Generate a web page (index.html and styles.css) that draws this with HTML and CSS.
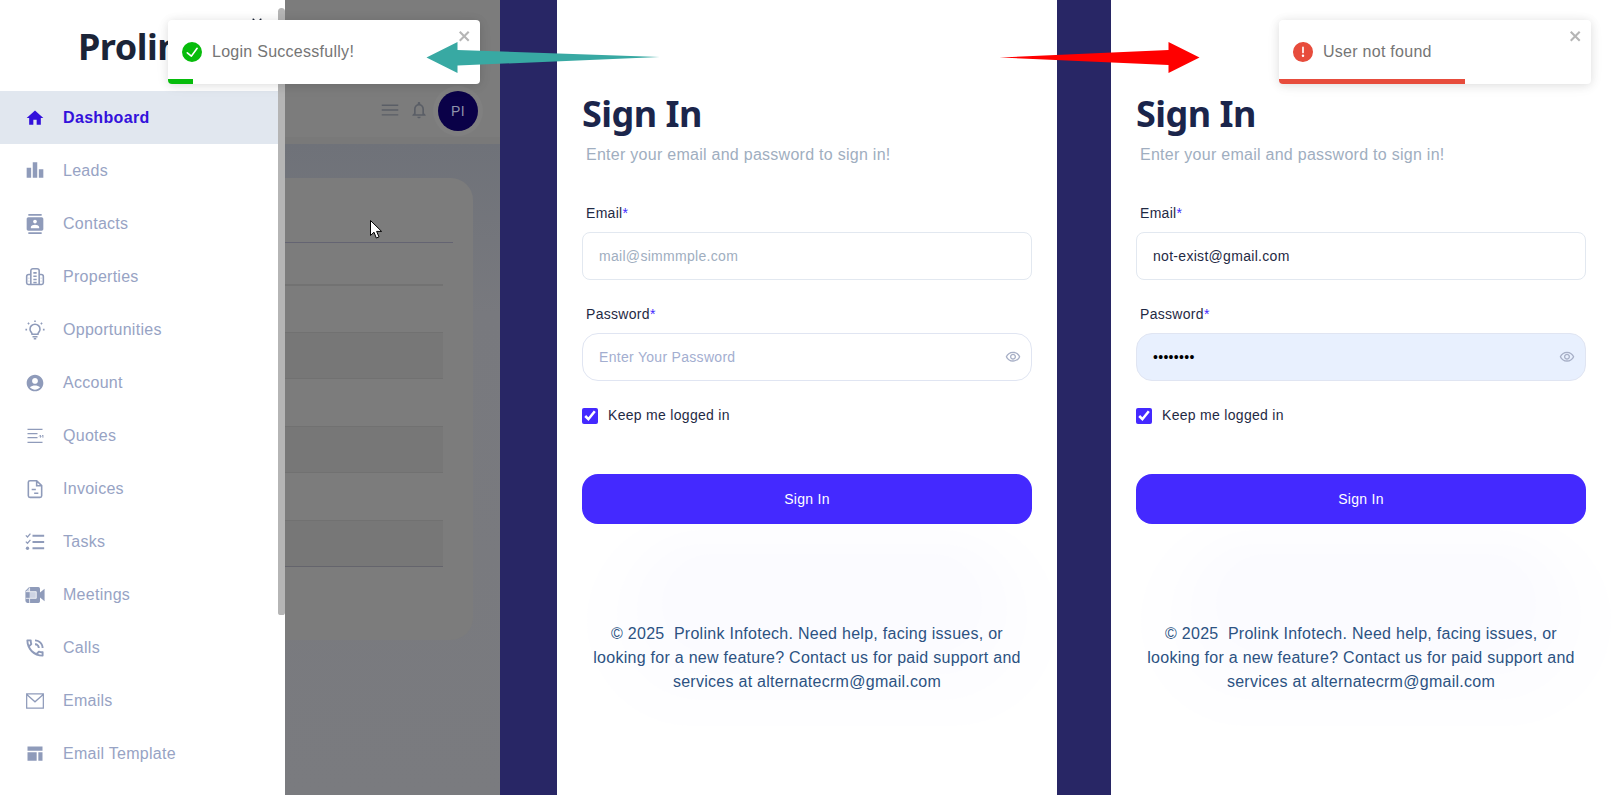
FILE: index.html
```html
<!DOCTYPE html>
<html lang="en">
<head>
<meta charset="utf-8">
<title>Prolink Infotech</title>
<link rel="stylesheet" href="styles.css">
</head>
<body>
<div class="stage">
  <section class="app">
    <aside class="sidebar">
      <div class="logo-row">
        <span class="logo">Prolink</span>
        <svg class="side-close" viewBox="0 0 14 14"><path d="M2 2l10 10M12 2L2 12"/></svg>
      </div>
      <nav class="nav">
        <a class="nav-item active"><svg class="nav-icon" viewBox="0 0 24 24"><path d="M10 20v-6h4v6h5v-8h3L12 3 2 12h3v8z"/></svg><span>Dashboard</span></a>
        <a class="nav-item"><svg class="nav-icon" viewBox="0 0 24 24"><path d="M2 8h5.400v12H2zM9.300 1.500h5.400V20H9.300zM16.600 10H22v10h-5.400z"/></svg><span>Leads</span></a>
        <a class="nav-item"><svg class="nav-icon" viewBox="0 0 24 24"><path d="M20 0H4v2h16V0zM4 24h16v-2H4v2zM20 4H4c-1.100 0-2 .9-2 2v12c0 1.100.9 2 2 2h16c1.100 0 2-.9 2-2V6c0-1.100-.9-2-2-2zm-8 2.750c1.240 0 2.250 1.010 2.250 2.250s-1.010 2.250-2.250 2.250S9.750 10.240 9.750 9 10.760 6.750 12 6.750zM17 17H7v-1.500c0-1.670 3.330-2.500 5-2.500s5 .83 5 2.500V17z"/></svg><span>Contacts</span></a>
        <a class="nav-item"><svg class="nav-icon line" viewBox="0 0 24 24"><path d="M7 21V4.500A2.500 2.500 0 0 1 9.500 2h5A2.500 2.500 0 0 1 17 4.500V21M7 9H4.500A2.500 2.500 0 0 0 2 11.500V19a2 2 0 0 0 2 2h16a2 2 0 0 0 2-2v-7.500A2.500 2.500 0 0 0 19.500 9H17M10 7h4M10 11h4M10 15h4M10 18.500h4M4.500 13.500h.5M4.500 17h.5M19 13.500h.5M19 17h.5"/></svg><span>Properties</span></a>
        <a class="nav-item"><svg class="nav-icon line" viewBox="0 0 24 24"><path d="M8.500 17c0-1.800-2.500-3-2.500-6a6 6 0 0 1 12 0c0 3-2.500 4.200-2.500 6zM9 20h6M10.500 22.500h3M12 .5v2M3.500 3.500l1.500 1.500M20.500 3.500L19 5M.5 11.500h2M21.500 11.500h2"/></svg><span>Opportunities</span></a>
        <a class="nav-item"><svg class="nav-icon" viewBox="0 0 24 24"><path d="M12 2C6.480 2 2 6.480 2 12s4.480 10 10 10 10-4.480 10-10S17.520 2 12 2zm0 4c1.930 0 3.500 1.570 3.500 3.500S13.930 13 12 13s-3.500-1.570-3.500-3.500S10.070 6 12 6zm0 14c-2.030 0-4.430-.820-6.140-2.880C7.550 15.800 9.680 15 12 15s4.450.8 6.140 2.120C16.430 19.180 14.030 20 12 20z"/></svg><span>Account</span></a>
        <a class="nav-item"><svg class="nav-icon thin" viewBox="0 0 24 24"><path d="M3 4h18M3 9h12M3 14h12M3 19.500h18"/><path class="quote" d="M17 12.500l1.500-1.500v3M20 12.500l1.500-1.500v3"/></svg><span>Quotes</span></a>
        <a class="nav-item"><svg class="nav-icon line" viewBox="0 0 24 24"><path d="M14 2H6a2 2 0 0 0-2 2v16a2 2 0 0 0 2 2h12a2 2 0 0 0 2-2V8zM14 2v6h6M8 12.500h5M11 17h5"/></svg><span>Invoices</span></a>
        <a class="nav-item"><svg class="nav-icon thick" viewBox="0 0 24 24"><path d="M9 4.500h14M9 12h14M9 19.500h14"/><path class="tick" d="M1 4l2 2 3.500-4M1 11.500l2 2 3.500-4"/><circle class="dot" cx="3" cy="19.500" r="2"/></svg><span>Tasks</span></a>
        <a class="nav-item"><svg class="nav-icon" viewBox="0 0 24 24"><path d="M5 2.500h11a2 2 0 0 1 2 2V9l5.500-4.500v15L18 15v4.500a2 2 0 0 1-2 2H3a2.500 2.500 0 0 1-2.500-2.500V7z"/><path class="cut" d="M5.500 8h8v8h-8M5.500 3v5H1M5.500 16v5.500M1 16h4.500"/></svg><span>Meetings</span></a>
        <a class="nav-item"><svg class="nav-icon" viewBox="1.500 1.500 21 21"><path d="M15 12h2c0-2.760-2.240-5-5-5v2c1.660 0 3 1.340 3 3zm4 0h2c0-4.970-4.030-9-9-9v2c3.870 0 7 3.130 7 7zm1 3.500c-1.250 0-2.450-.2-3.570-.57-.1-.03-.21-.05-.31-.05-.26 0-.51.1-.71.29l-2.200 2.200c-2.830-1.440-5.150-3.750-6.590-6.590l2.200-2.210c.28-.26.36-.65.25-1C8.700 6.450 8.500 5.250 8.500 4c0-.55-.45-1-1-1H4c-.55 0-1 .45-1 1 0 9.390 7.610 17 17 17 .55 0 1-.45 1-1v-3.500c0-.55-.45-1-1-1zM5.030 5h1.500c.07.88.22 1.750.45 2.580l-1.200 1.210c-.4-1.210-.66-2.470-.75-3.790zM19 18.970c-1.320-.09-2.600-.35-3.800-.76l1.200-1.200c.85.24 1.720.39 2.600.45v1.510z"/></svg><span>Calls</span></a>
        <a class="nav-item"><svg class="nav-icon line mail" viewBox="0 0 24 24"><path d="M2 3.500h20v17H2zM2.500 4.500L12 13l9.500-8.500"/></svg><span>Emails</span></a>
        <a class="nav-item"><svg class="nav-icon" viewBox="0 0 24 24"><path d="M3 3h18v5H3zM3 10h11v10H3zM16 10h5v10h-5z"/></svg><span>Email Template</span></a>
      </nav>
      <div class="scroll-thumb"></div>
    </aside>
    <main class="main">
      <header class="topbar">
        <div class="tools">
          <svg class="tool-icon" viewBox="0 0 24 24"><path d="M3 18h18v-1.500H3V18zm0-5.250h18v-1.500H3v1.500zM3 6v1.500h18V6H3z"/></svg>
          <svg class="tool-icon bell" viewBox="0 0 24 24"><path d="M12 22c1.100 0 2-.9 2-2h-4c0 1.100.9 2 2 2zm6-6v-5c0-3.070-1.630-5.640-4.500-6.320V4c0-.83-.67-1.500-1.500-1.500s-1.500.67-1.500 1.500v.68C7.640 5.360 6 7.920 6 11v5l-2 2v1h16v-1l-2-2zm-2 1H8v-6c0-2.480 1.510-4.500 4-4.500s4 2.020 4 4.500v6z"/></svg>
          <div class="avatar">PI</div>
        </div>
      </header>
      <div class="content">
        <div class="card">
          <div class="row row-head"></div>
          <div class="row row-a"></div>
          <div class="row row-b"></div>
          <div class="row row-c"></div>
          <div class="row row-c row-gap"></div>
          <div class="row row-c"></div>
          <div class="row row-c row-gap"></div>
          <div class="row row-c row-last"></div>
        </div>
      </div>
    </main>
    <div class="toast">
      <div class="toast-body">
        <svg class="toast-icon success" viewBox="0 0 24 24"><path d="M12 0a12 12 0 1012 12A12.014 12.014 0 0012 0zm6.927 8.200l-6.845 9.289a1.011 1.011 0 01-1.430.188l-4.888-3.908a1 1 0 111.250-1.562l4.076 3.261 6.227-8.451a1 1 0 111.610 1.183z"/></svg>
        <span>Login Successfully!</span>
      </div>
      <svg class="toast-close" viewBox="0 0 14 16"><path d="M7.710 8.230l3.750 3.750-1.480 1.480-3.750-3.750-3.750 3.750L1 11.980l3.750-3.750L1 4.480 2.480 3l3.750 3.750L9.980 3l1.480 1.480-3.750 3.750z"/></svg>
      <div class="progress progress-success"></div>
    </div>
  </section>

  <div class="divider"></div>

  <section class="auth">
    <svg class="waves" viewBox="0 0 500 210"><rect x="30" y="0" width="470" height="210" rx="105"/><rect x="60" y="14" width="410" height="170" rx="85"/><rect x="80" y="28" width="370" height="130" rx="65"/><rect x="105" y="38" width="320" height="100" rx="50"/></svg>
    <h1 class="title">Sign In</h1>
    <p class="subtitle">Enter your email and password to sign in!</p>
    <form class="form">
      <label class="label">Email<em>*</em></label>
      <input class="field field-email" type="email" placeholder="mail@simmmple.com">
      <label class="label label-pass">Password<em>*</em></label>
      <div class="pass-wrap">
        <input class="field field-pass" type="password" placeholder="Enter Your Password">
        <svg class="eye" viewBox="0 0 24 24"><path d="M12 6c3.790 0 7.170 2.130 8.820 5.500C19.170 14.870 15.790 17 12 17s-7.170-2.130-8.820-5.500C4.830 8.130 8.210 6 12 6m0-2C7 4 2.730 7.110 1 11.500 2.730 15.890 7 19 12 19s9.270-3.110 11-7.500C21.270 7.110 17 4 12 4zm0 5c1.380 0 2.500 1.120 2.500 2.500S13.380 14 12 14s-2.500-1.120-2.500-2.500S10.620 9 12 9m0-2c-2.480 0-4.500 2.020-4.500 4.500S9.520 16 12 16s4.500-2.020 4.500-4.500S14.480 7 12 7z"/></svg>
      </div>
      <label class="keep"><input class="check" type="checkbox" checked><span>Keep me logged in</span></label>
      <button class="submit" type="button">Sign In</button>
    </form>
    <p class="foot">© 2025&nbsp; Prolink Infotech. Need help, facing issues, or looking for a new feature? Contact us for paid support and services at alternatecrm@gmail.com</p>
  </section>

  <div class="divider"></div>

  <section class="auth">
    <svg class="waves" viewBox="0 0 500 210"><rect x="30" y="0" width="470" height="210" rx="105"/><rect x="60" y="14" width="410" height="170" rx="85"/><rect x="80" y="28" width="370" height="130" rx="65"/><rect x="105" y="38" width="320" height="100" rx="50"/></svg>
    <h1 class="title">Sign In</h1>
    <p class="subtitle">Enter your email and password to sign in!</p>
    <form class="form">
      <label class="label">Email<em>*</em></label>
      <input class="field field-email" type="email" value="not-exist@gmail.com">
      <label class="label label-pass">Password<em>*</em></label>
      <div class="pass-wrap">
        <input class="field field-pass autofilled" type="password" value="password">
        <svg class="eye" viewBox="0 0 24 24"><path d="M12 6c3.790 0 7.170 2.130 8.820 5.500C19.170 14.870 15.790 17 12 17s-7.170-2.130-8.820-5.500C4.830 8.130 8.210 6 12 6m0-2C7 4 2.730 7.110 1 11.500 2.730 15.890 7 19 12 19s9.270-3.110 11-7.500C21.270 7.110 17 4 12 4zm0 5c1.380 0 2.500 1.120 2.500 2.500S13.380 14 12 14s-2.500-1.120-2.500-2.500S10.620 9 12 9m0-2c-2.480 0-4.500 2.020-4.500 4.500S9.520 16 12 16s4.500-2.020 4.500-4.500S14.480 7 12 7z"/></svg>
      </div>
      <label class="keep"><input class="check" type="checkbox" checked><span>Keep me logged in</span></label>
      <button class="submit" type="button">Sign In</button>
    </form>
    <p class="foot">© 2025&nbsp; Prolink Infotech. Need help, facing issues, or looking for a new feature? Contact us for paid support and services at alternatecrm@gmail.com</p>
    <div class="toast">
      <div class="toast-body">
        <svg class="toast-icon error" viewBox="0 0 24 24"><path d="M11.983 0a12.206 12.206 0 00-8.510 3.653A11.800 11.800 0 000 12.207 11.779 11.779 0 0011.800 24h.214A12.111 12.111 0 0024 11.791 11.766 11.766 0 0011.983 0zM10.500 16.542a1.476 1.476 0 011.449-1.530h.027a1.527 1.527 0 011.523 1.470 1.475 1.475 0 01-1.449 1.530h-.027a1.529 1.529 0 01-1.523-1.470zM11 12.500v-6a1 1 0 012 0v6a1 1 0 11-2 0z"/></svg>
        <span>User not found</span>
      </div>
      <svg class="toast-close" viewBox="0 0 14 16"><path d="M7.710 8.230l3.750 3.750-1.480 1.480-3.750-3.750-3.750 3.750L1 11.980l3.750-3.750L1 4.480 2.480 3l3.750 3.750L9.980 3l1.480 1.480-3.750 3.750z"/></svg>
      <div class="progress progress-error"></div>
    </div>
  </section>

  <svg class="annot arrow-teal" viewBox="0 0 234 32"><path d="M0 15.500L31 0v8l202 7-202 8.500V31z"/></svg>
  <svg class="annot arrow-red" viewBox="0 0 201 32"><path d="M0 15.500l169-7.500V0l31 15.500L169 31v-8z"/></svg>
  <svg class="annot cursor" viewBox="0 0 12 19"><path d="M.5.5v15l3.500-3.300 2.300 5.800 2.700-1.100-2.400-5.500h5z"/></svg>
</div>
</body>
</html>
```
FILE: styles.css
```css
* { box-sizing: border-box; }
html, body { margin: 0; padding: 0; height: 100%; overflow: hidden; background: #fff; }
body { font-family: "Liberation Sans", Arial, sans-serif; }

.stage {
  position: relative;
  display: grid;
  grid-template-columns: 500px 57px 500px 54px 500px;
  width: 1611px;
  height: 795px;
  overflow: hidden;
}

.divider { background: #282665; }

/* Left: app behind modal */
.app { position: relative; display: flex; height: 795px; overflow: hidden; }

.sidebar {
  position: relative;
  flex: 0 0 285px;
  background: #fff;
  z-index: 1;
}
.logo-row { position: relative; height: 91px; padding: 22px 0 0 78px; }
.logo {
  font-family: "Noto Sans", "Open Sans", sans-serif;
  font-size: 36px;
  font-weight: 700;
  letter-spacing: -.5px;
  line-height: 50px;
  color: #1b2437;
}
.side-close {
  position: absolute;
  left: 251px;
  top: 17px;
  width: 12px;
  height: 12px;
  fill: none;
  stroke: #1b2437;
  stroke-width: 1.6;
}
.nav { width: 278px; }
.nav-item {
  display: flex;
  align-items: center;
  gap: 18px;
  height: 53px;
  padding-left: 25px;
  font-size: 16px;
  letter-spacing: .27px;
  color: #97a3c4;
}
.nav-icon { flex: none; width: 20px; height: 20px; fill: #8f9bba; }
.nav-icon.line { fill: none; stroke: #8f9bba; stroke-width: 1.9; }
.nav-icon.mail { stroke-width: 1.5; }
.nav-icon.thin { fill: none; stroke: #8f9bba; stroke-width: 1.5; }
.nav-icon.thick { fill: none; stroke: #8f9bba; stroke-width: 2.6; }
.nav-icon .tick { stroke-width: 1.5; }
.nav-icon .quote { stroke-width: 1.2; }
.nav-icon .dot { fill: #8f9bba; stroke: none; }
.nav-icon .cut { fill: #cdd3e3; stroke: #fff; stroke-width: .9; }
.nav-item.active { background: #e1e7ef; color: #3311db; font-weight: 700; letter-spacing: .34px; }
.nav-item.active .nav-icon { fill: #3311db; }
.scroll-thumb {
  position: absolute;
  left: 278px;
  top: 8px;
  width: 7px;
  height: 607px;
  background: #b5b5b5;
  border-radius: 4px 4px 3px 3px;
}

.main {
  flex: 1;
  display: flex;
  flex-direction: column;
  background: #7a7b7f;
  min-width: 0;
}
.topbar {
  flex: 0 0 137px;
  display: flex;
  justify-content: flex-end;
  align-items: flex-end;
  background: #7c7c7c;
  padding: 0 22px 0 0;
}
.tools {
  display: flex;
  align-items: center;
  gap: 8px;
  height: 52px;
}
.tool-icon { width: 22px; height: 22px; fill: #5a5e66; margin-top: -2px; }
.bell { width: 20px; height: 20px; margin-right: 1px; }
.avatar {
  width: 40px;
  height: 40px;
  margin-top: -1px;
  border-radius: 50%;
  background: #0a0148;
  box-shadow: 0 0 0 5px #808080;
  color: #8f93ab;
  font-size: 14px;
  letter-spacing: .3px;
  line-height: 40px;
  text-align: center;
}
.content {
  flex: 1;
  padding: 34px 27px 0 0;
  background: linear-gradient(#6f7279 0, #78797e 170px, #7a7b7f 100%);
  border-top: 7px solid #797979;
}
.card {
  height: 462px;
  padding-top: 64px;
  background: #7c7c7c;
  border-radius: 0 22px 22px 0;
}
.row { margin-right: 30px; }
.row-head { height: 1px; margin-right: 20px; background: #646472; }
.row-a { height: 43px; border-bottom: 2px solid #727272; }
.row-b { height: 46px; }
.row-c { height: 47px; background: #777777; border-top: 1px solid #717171; border-bottom: 1px solid #717171; }
.row-gap { background: transparent; border: 0; }
.row-last { border-bottom-color: #64646c; }

/* Sign-in panels */
.auth { position: relative; padding: 86px 25px 0; height: 795px; background: #fff; overflow: hidden; }
.waves {
  position: absolute;
  left: 0;
  top: 516px;
  width: 500px;
  height: 210px;
}
.waves rect { fill: #f1f4fb; fill-opacity: .09; }
.title {
  position: relative;
  margin: 0;
  font-family: "Noto Sans", "Open Sans", sans-serif;
  font-size: 36px;
  line-height: 56px;
  font-weight: 700;
  letter-spacing: -.5px;
  color: #1b254b;
}
.subtitle {
  position: relative;
  margin: 1px 0 0;
  padding-left: 4px;
  font-size: 16px;
  line-height: 24px;
  letter-spacing: .27px;
  color: #a0aec0;
}
.form { position: relative; display: flex; flex-direction: column; margin-top: 35px; }
.label {
  padding-left: 4px;
  height: 22px;
  font-size: 14px;
  letter-spacing: .3px;
  line-height: 22px;
  color: #1f2a44;
  margin-bottom: 8px;
}
.label em { font-style: normal; color: #4429ff; }
.label-pass { margin-top: 23px; }
.field {
  display: block;
  width: 100%;
  height: 48px;
  padding: 0 16px;
  border: 1px solid #e2e8f0;
  border-radius: 8px;
  background: #fff;
  font-family: inherit;
  font-size: 14px;
  letter-spacing: .3px;
  color: #1f2a44;
  outline: none;
}
.field::placeholder { color: #a0aec0; opacity: 1; }
.field-pass { border-radius: 16px; border-color: #e0e5f2; color: #000; }
.field-pass::placeholder { color: #a3aed0; }
.field.autofilled { background: #e8f0fe; }
.pass-wrap { position: relative; }
.eye { position: absolute; right: 11px; top: 16px; width: 16px; height: 16px; fill: #a7afc6; }
.keep {
  display: flex;
  align-items: center;
  gap: 10px;
  margin-top: 27px;
  height: 16px;
  font-size: 14px;
  letter-spacing: .3px;
  color: #1f2a44;
}
.keep span { margin-top: -2px; }
.check { width: 16px; height: 16px; margin: 0; accent-color: #4429ff; }
.submit {
  height: 50px;
  margin-top: 50px;
  border: 0;
  border-radius: 16px;
  background: #4429ff;
  color: #fff;
  font-family: inherit;
  font-size: 14px;
  letter-spacing: .3px;
}
.foot {
  position: relative;
  margin: 98px 0 0;
  padding: 0 8px;
  font-size: 16px;
  line-height: 24px;
  letter-spacing: .27px;
  text-align: center;
  color: #2c5282;
}

/* Toasts */
.toast {
  position: absolute;
  left: 168px;
  top: 20px;
  width: 312px;
  height: 64px;
  z-index: 3;
  background: #fff;
  border-radius: 4px;
  box-shadow: 0 1px 10px rgba(0,0,0,.1), 0 2px 15px rgba(0,0,0,.05);
  overflow: hidden;
}
.toast-body {
  display: flex;
  align-items: center;
  gap: 10px;
  height: 64px;
  padding: 0 14px;
  font-size: 16px;
  letter-spacing: .27px;
  color: #757575;
}
.toast-icon { flex: none; width: 20px; height: 20px; }
.success { fill: #07bc0c; }
.error { fill: #e74c3c; }
.toast-close {
  position: absolute;
  right: 8px;
  top: 8px;
  width: 14px;
  height: 16px;
  fill: #b5b5b5;
}
.progress { position: absolute; left: 0; bottom: 0; height: 5px; }
.progress-success { width: 25px; background: #07bc0c; }
.progress-error { width: 186px; background: #e74c3c; }

/* Annotation overlays */
.annot { position: absolute; z-index: 5; }
.arrow-teal { left: 426px; top: 42px; width: 235px; height: 32px; fill: #38a9a3; }
.arrow-red { left: 999px; top: 42px; width: 202px; height: 32px; fill: #ff0000; }
.cursor { left: 370px; top: 220px; width: 12px; height: 19px; fill: #fff; stroke: #000; stroke-width: 1; }
```
